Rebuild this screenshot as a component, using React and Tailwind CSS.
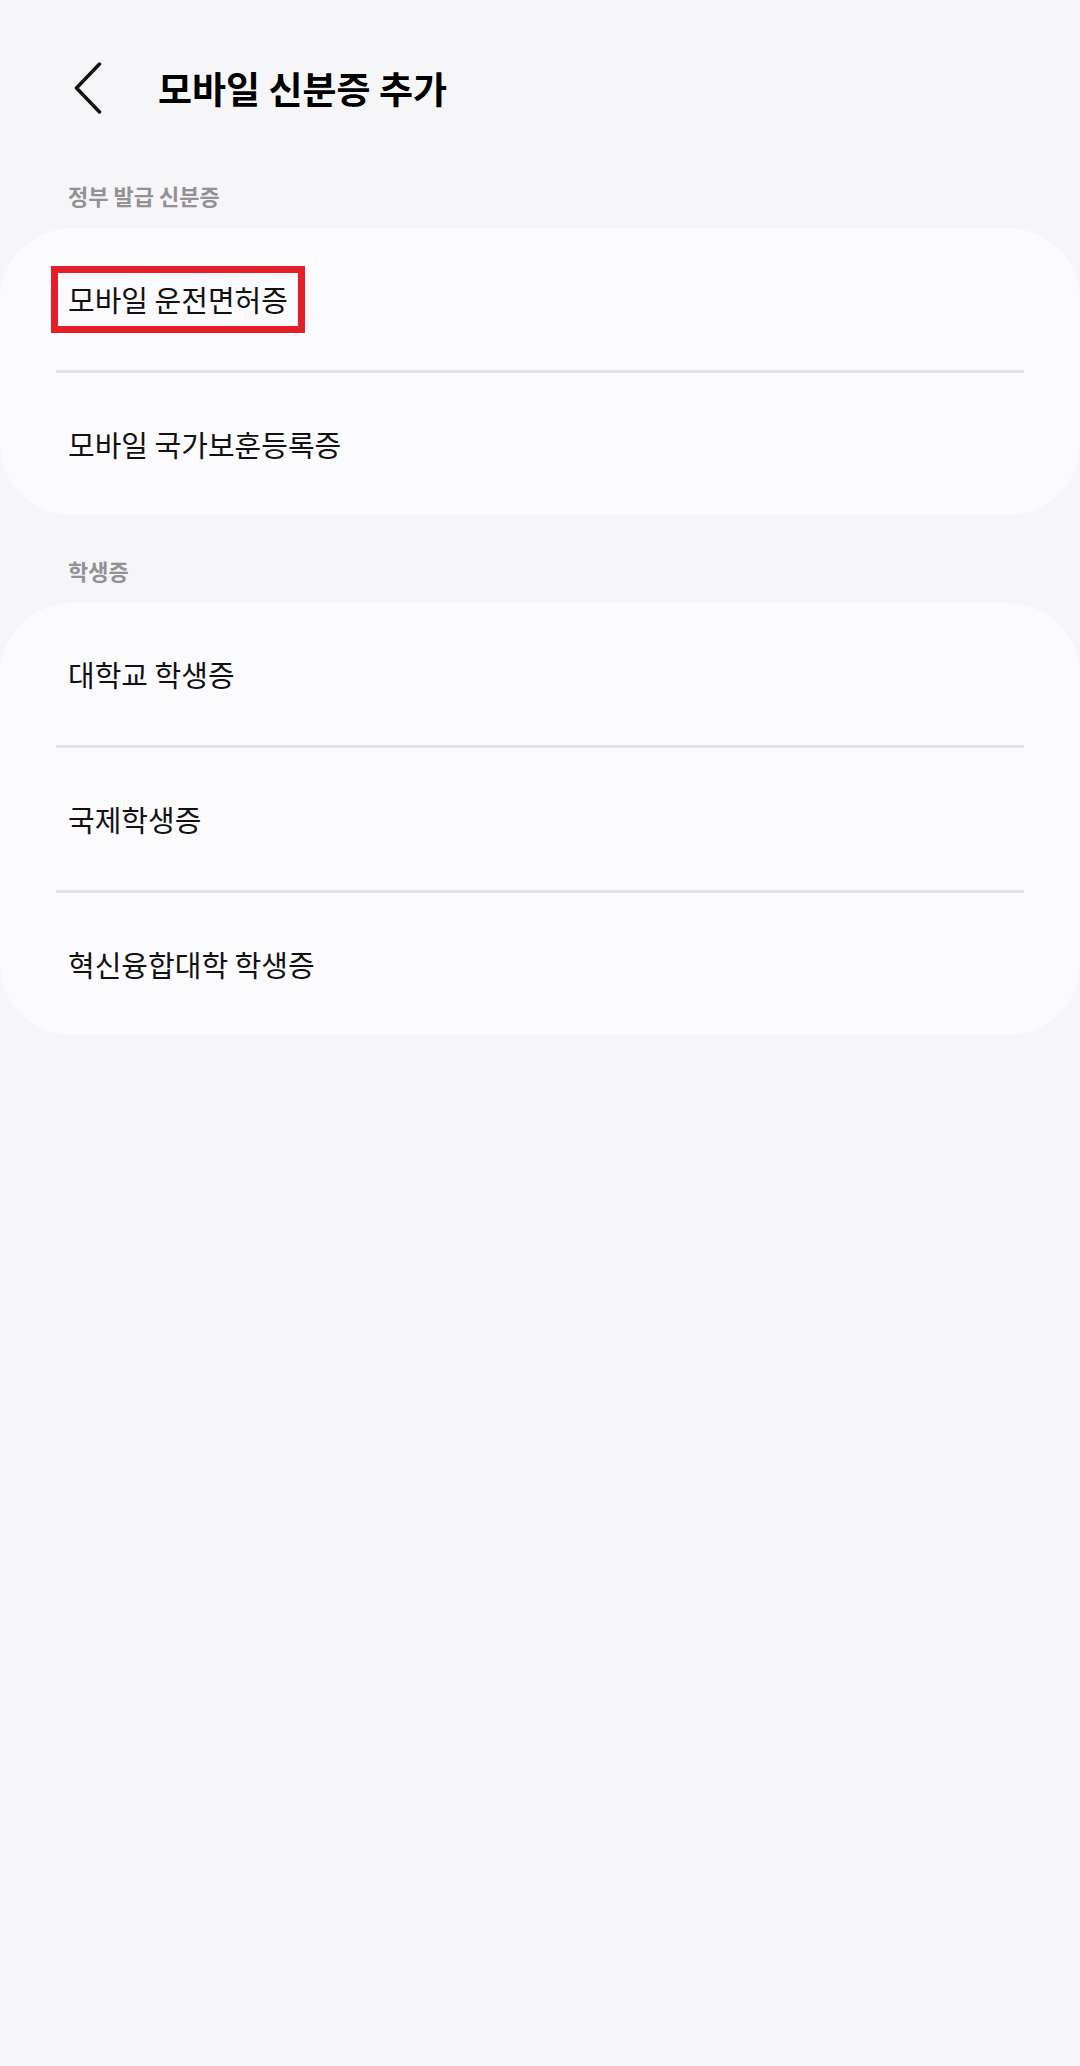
import React from "react";

const font = { fontFamily: '"Noto Sans CJK KR", "Noto Sans", sans-serif' };

const Row = ({ children }) => (
  <div className="h-[142px] flex items-center px-[68px] text-[29px] text-[#111] leading-none">
    {children}
  </div>
);

const Divider = () => <div className="mx-[56px] h-[3px] bg-[#e3e3e7]" />;

const SectionLabel = ({ children, top }) => (
  <div className={`pl-[68px] ${top} pb-[18px] text-[22px] leading-[30px] font-bold text-[#919196]`}>
    {children}
  </div>
);

const App = () => {
  return (
    <div className="w-[1080px] h-[2066px] bg-[#f6f6f8]" style={font}>
      {/* header */}
      <div className="h-[176px] flex items-center pl-[74px] gap-[56px]">
        <svg width="28" height="52" viewBox="0 0 28 52" fill="none">
          <path d="M25.5 2 L2.5 26 L25.5 50" stroke="#111" strokeWidth="3.5" strokeLinecap="round" strokeLinejoin="round" />
        </svg>
        <h1 className="text-[37px] font-bold text-black leading-none">모바일 신분증 추가</h1>
      </div>

      <SectionLabel top="pt-[4px]">정부 발급 신분증</SectionLabel>
      <div className="bg-[#fbfbfd] rounded-[72px] overflow-hidden">
        <Row>
          <span className="inline-block border-[7px] border-[#e41f27] px-[10px] py-[12px] -mx-[17px] -my-[19px]">
            모바일 운전면허증
          </span>
        </Row>
        <Divider />
        <Row>모바일 국가보훈등록증</Row>
      </div>

      <SectionLabel top="pt-[40px]">학생증</SectionLabel>
      <div className="bg-[#fbfbfd] rounded-[72px] overflow-hidden">
        <Row>대학교 학생증</Row>
        <Divider />
        <Row>국제학생증</Row>
        <Divider />
        <Row>혁신융합대학 학생증</Row>
      </div>
    </div>
  );
};

export default App;
